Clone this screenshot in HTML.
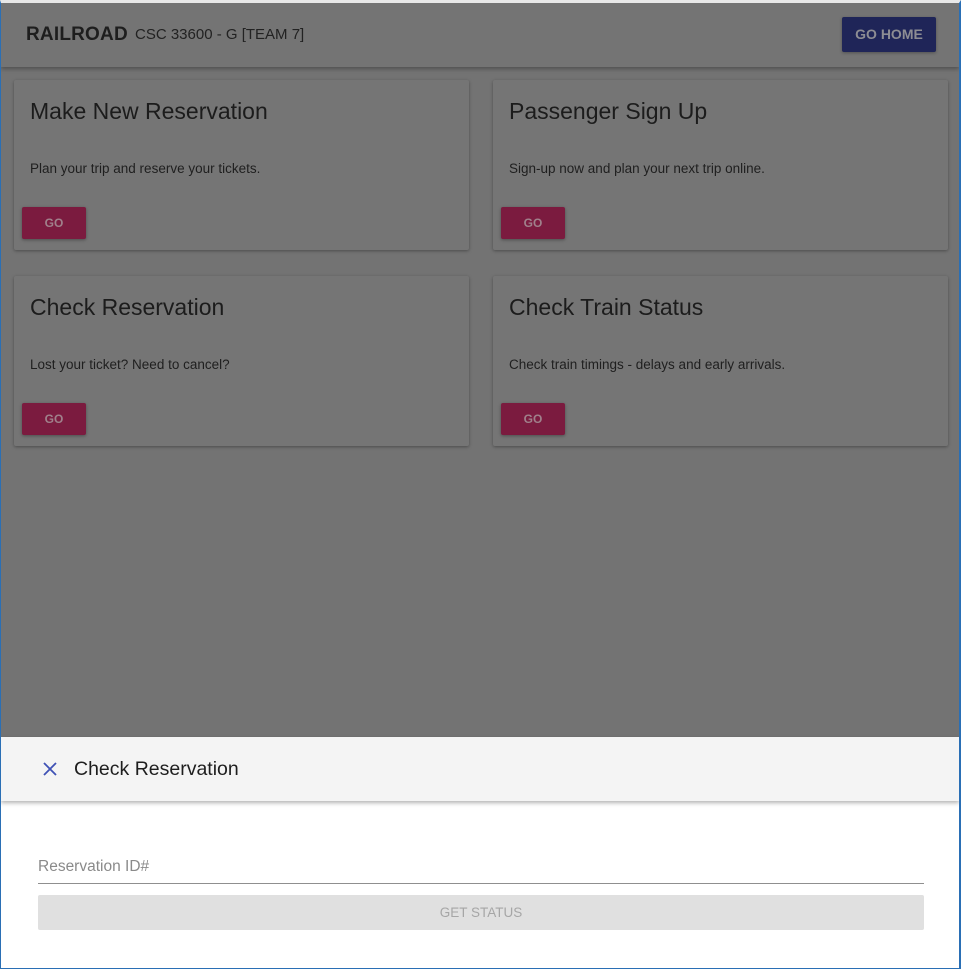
<!DOCTYPE html>
<html><head><style>
*{margin:0;padding:0;box-sizing:border-box}
body{width:961px;height:969px;overflow:hidden;background:#737373;font-family:"Liberation Sans",sans-serif;position:relative}
.frame{position:absolute;inset:0;border-left:1px solid #2a6fb5;border-right:2px solid #2a6fb5;border-bottom:1px solid #2a6fb5;border-top:3px solid #e8e8e8;pointer-events:none;z-index:10}
.hdr{position:absolute;left:1px;top:3px;width:958px;height:64px;background:#747474;box-shadow:0 2px 4px rgba(0,0,0,.3)}
.brand{position:absolute;left:25px;top:21px;font-size:19px;color:#1e1e1e;font-weight:bold;letter-spacing:0.2px}
.sub{position:absolute;left:134px;top:23px;font-size:15px;color:#222}
.home{position:absolute;left:841px;top:14px;width:94px;height:35px;background:#1f2558;border-radius:2px;color:#8d8d93;font-size:14px;font-weight:bold;text-align:center;line-height:35px;box-shadow:0 1px 3px rgba(0,0,0,.3)}
.card{position:absolute;width:455px;height:170px;background:#757575;border-radius:2px;box-shadow:0 1px 3px rgba(0,0,0,.35)}
.card h2{position:absolute;left:16px;top:18px;font-size:23px;font-weight:normal;color:#1c1c1c}
.card p{position:absolute;left:16px;top:81px;font-size:13.5px;color:#1f1f1f}
.go{position:absolute;left:8px;top:127px;width:64px;height:32px;background:#7b1b3f;border-radius:2px;color:#a0808b;font-size:12px;font-weight:bold;text-align:center;line-height:32px;box-shadow:0 1px 3px rgba(0,0,0,.35)}
.sheet{position:absolute;left:1px;top:737px;width:958px;height:231px;background:#fff}
.sh{height:64px;background:#f4f4f4;box-shadow:0 2px 4px rgba(0,0,0,.3);position:relative}
.sh .t{position:absolute;left:73px;top:21px;font-size:19.5px;color:#1e1e1e}
.lbl{position:absolute;left:37px;top:121px;font-size:15.5px;color:#8a8a8a}
.line{position:absolute;left:37px;top:146px;width:886px;height:1px;background:#8f8f8f}
.btn{position:absolute;left:37px;top:158px;width:886px;height:35px;background:#e0e0e0;border-radius:2px;color:#a6a6a6;font-size:13.5px;text-align:center;line-height:35px}
</style></head><body>
<div class="hdr"><div class="brand">RAILROAD</div><div class="sub">CSC 33600 - G [TEAM 7]</div><div class="home">GO HOME</div></div>
<div class="card" style="left:14px;top:80px"><h2>Make New Reservation</h2><p>Plan your trip and reserve your tickets.</p><div class="go">GO</div></div>
<div class="card" style="left:493px;top:80px"><h2>Passenger Sign Up</h2><p>Sign-up now and plan your next trip online.</p><div class="go">GO</div></div>
<div class="card" style="left:14px;top:276px"><h2>Check Reservation</h2><p>Lost your ticket? Need to cancel?</p><div class="go">GO</div></div>
<div class="card" style="left:493px;top:276px"><h2>Check Train Status</h2><p>Check train timings - delays and early arrivals.</p><div class="go">GO</div></div>
<div class="sheet"><div class="sh"><svg width="16" height="16" viewBox="0 0 16 16" style="position:absolute;left:41px;top:24px"><path d="M2 2L14 14M14 2L2 14" stroke="#3f51b5" stroke-width="1.8"/></svg><div class="t">Check Reservation</div></div>
<div class="lbl">Reservation ID#</div><div class="line"></div><div class="btn">GET STATUS</div></div>
<div class="frame"></div>
</body></html>
